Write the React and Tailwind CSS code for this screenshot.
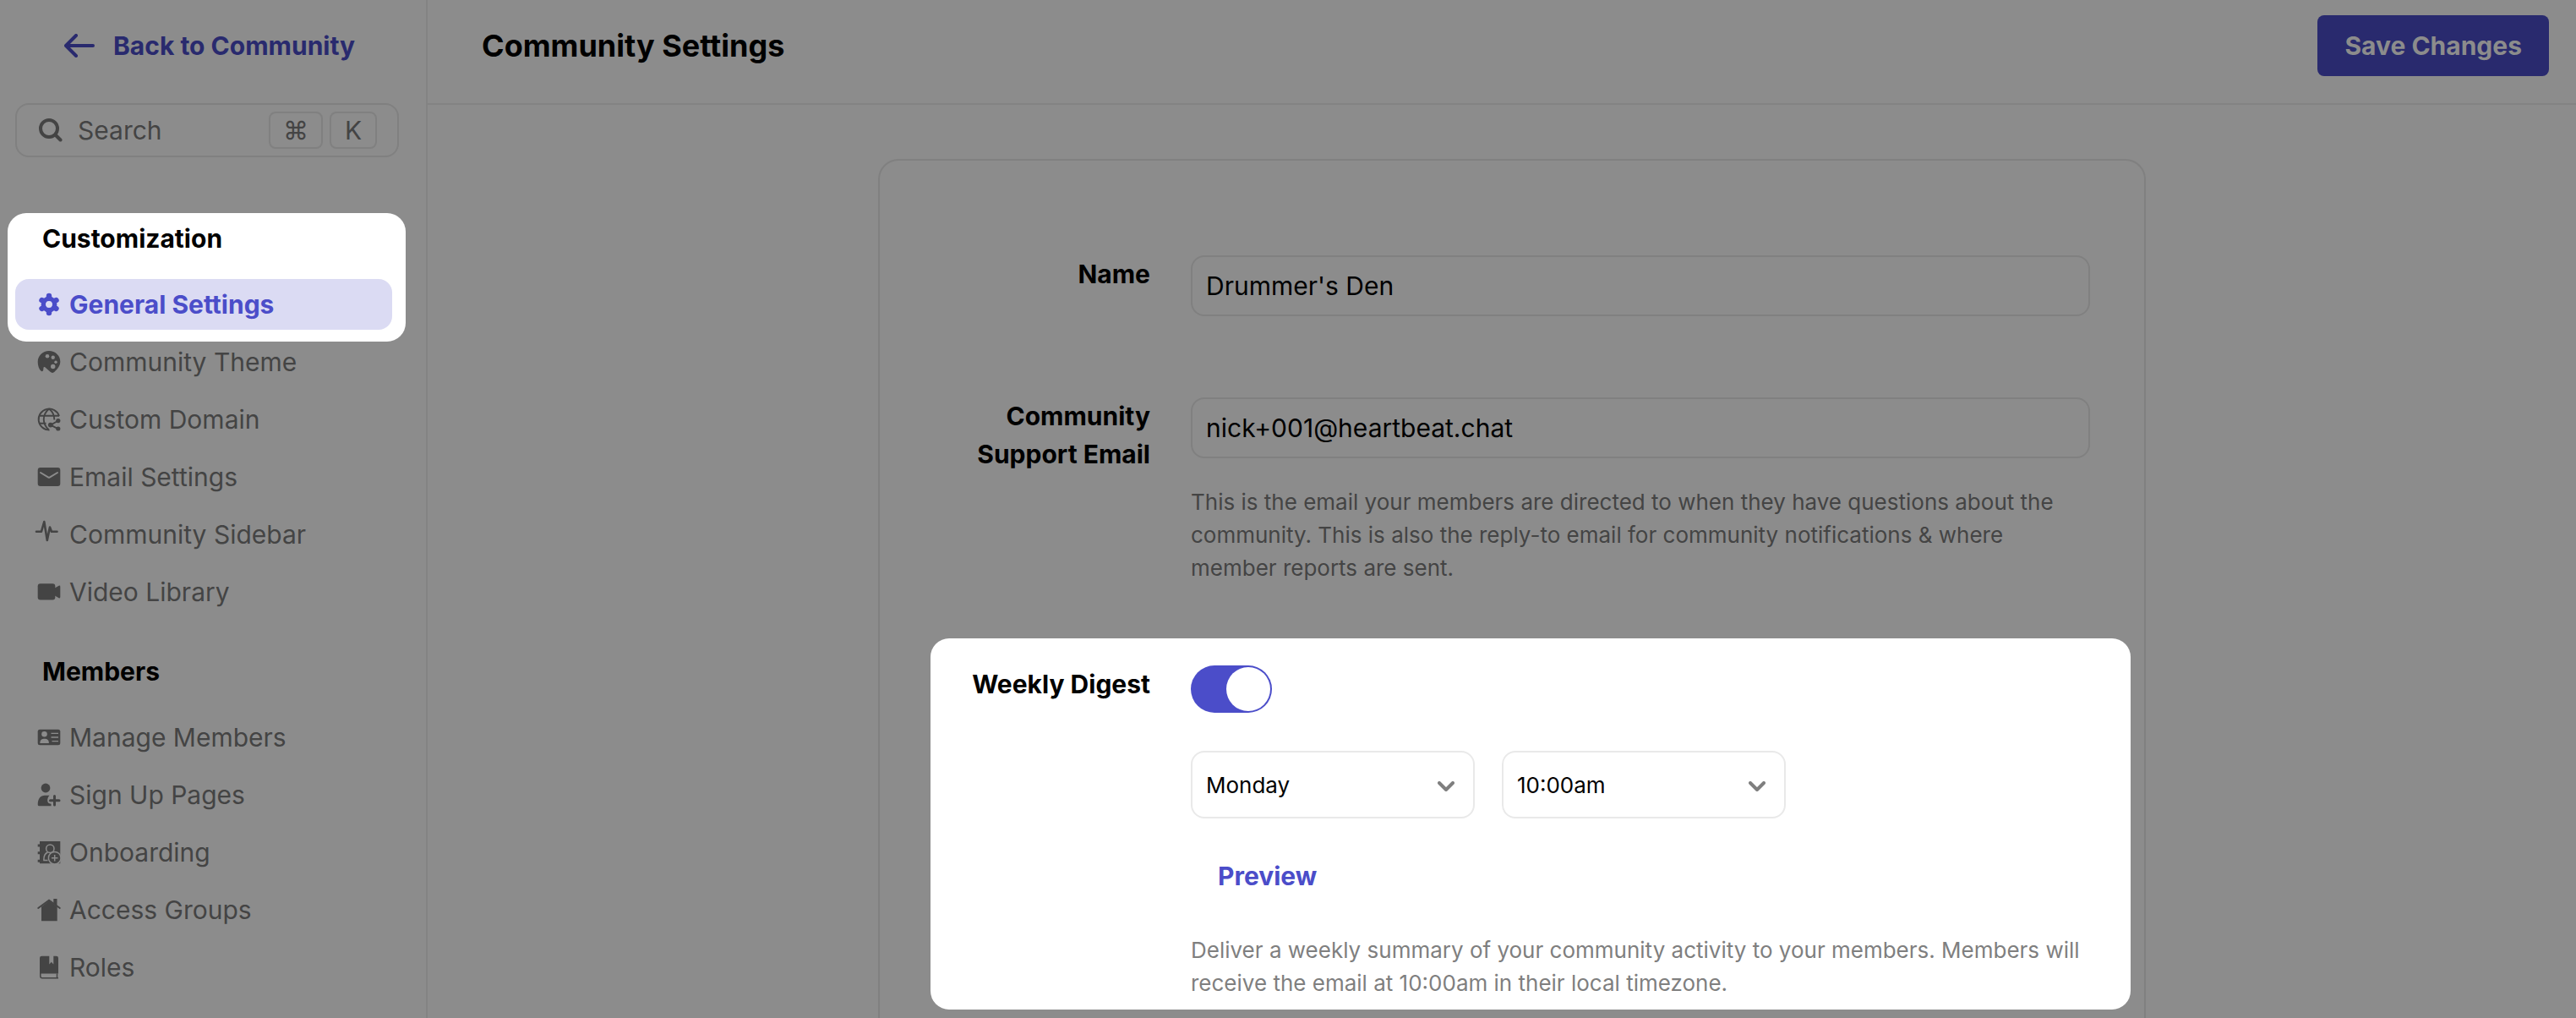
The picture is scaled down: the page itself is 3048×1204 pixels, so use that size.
import React, { useState } from 'react';

const Icon = ({ children }) => (
  <svg viewBox="0 0 28 28" fill="currentColor" className="size-7 shrink-0 overflow-visible" aria-hidden="true">
    {children}
  </svg>
);

const GearIcon = () => (
  <Icon>
    <circle cx="14" cy="14" r="6.7" fill="none" stroke="currentColor" strokeWidth="5.4" />
    <path
      d="M14 6.5V3.9M14 21.5V24.1M20.5 10.3L22.5 9.1M20.5 17.7L22.5 18.9M7.5 10.3L5.5 9.1M7.5 17.7L5.5 18.9"
      stroke="currentColor"
      strokeWidth="6.4"
      strokeLinecap="round"
    />
  </Icon>
);

const PaletteIcon = () => (
  <Icon>
    <path d="M14 1C6.6 1 .7 6.8.7 14c0 4.700 1.500 8.600 3.600 10.600 1.200 1.100 2.700.6 2.900-1L7.500 20.800c.1-.9 1-1.100 1.700-.6L15.500 25.800c1.600 1.500 3.600 1.500 5 0C24.500 21.800 27.300 18.500 27.300 13.500 27.300 6.500 21.300 1 14 1Z" />
    <g fill="#8c8c8c">
      <circle cx="12" cy="7.3" r="2.3" />
      <circle cx="18.7" cy="8.7" r="2.2" />
      <circle cx="22" cy="14.3" r="1.7" />
      <circle cx="18.7" cy="19.5" r="2.7" />
    </g>
  </Icon>
);

const GlobeShareIcon = () => (
  <Icon>
    <g fill="none" stroke="currentColor" strokeWidth="1.9">
      <path d="M26 10A12.500 12.500 0 1 0 14.500 26.500" />
      <path d="M2 9.700H26M2 18.700H10.500M14 1.500C5.500 9 6 19 13.500 26M14 1.500C18.500 5 20.300 9.500 20.300 14.500" />
    </g>
    <path d="M25.300 15.300 16 20.700 25 25.300" fill="none" stroke="currentColor" strokeWidth="1.9" />
    <circle cx="24.8" cy="15.6" r="2.6" />
    <circle cx="15.8" cy="20.6" r="2.9" />
    <circle cx="24.8" cy="25" r="2.6" />
  </Icon>
);

const MailIcon = () => (
  <Icon>
    <rect x=".7" y="3" width="26.6" height="22" rx="3" />
    <path d="M4 9 13.300 14.700Q14 15 14.700 14.700L24 9" fill="none" stroke="#8c8c8c" strokeWidth="2" strokeLinecap="round" />
  </Icon>
);

const PulseIcon = () => (
  <Icon>
    <path
      d="M-1 10.700H5L8.300-1 11.800 21 15 5.500 17 10.700H23.500"
      fill="none"
      stroke="currentColor"
      strokeWidth="2.6"
      strokeLinecap="round"
      strokeLinejoin="round"
    />
  </Icon>
);

const VideoIcon = () => (
  <Icon>
    <rect x=".7" y="4.3" width="20.6" height="19.3" rx="3" />
    <path d="M20 10 25.600 6.700Q27.300 6 27.300 8V20Q27.300 22 25.600 21.300L20 18Z" />
  </Icon>
);

const IdCardIcon = () => (
  <Icon>
    <rect x=".7" y="4.7" width="26.6" height="18.6" rx="2.5" />
    <g fill="#8c8c8c">
      <circle cx="8.5" cy="10.3" r="3.3" />
      <path d="M3.300 21C3.300 17 5.500 15.700 8.600 15.700S13.900 17 13.900 21Z" />
    </g>
    <path d="M16.500 9.300H25M16.500 14H25M17.500 18.700H25" stroke="#8c8c8c" strokeWidth="1.3" />
  </Icon>
);

const UserPlusIcon = () => (
  <Icon>
    <circle cx="10" cy="6" r="5.4" />
    <path d="M.7 25.500C.7 18.500 4 14.700 9 14.700H14.500C12 17.500 11.800 20.500 12.500 22.500 13.500 24.500 15 24.500 16.500 24.700V27.300H2Q.7 27.300.7 25.500Z" />
    <path d="M20.500 15.500V26M15.500 20.700H26" stroke="currentColor" strokeWidth="3" strokeLinecap="round" />
  </Icon>
);

const ContactBookIcon = () => (
  <Icon>
    <path d="M3 1H27.300V27.300H3V25.800H.7V22.800H3V16.300H.7V13.300H3V7.500H.7V4.500H3Z" />
    <g fill="none" stroke="#8c8c8c" strokeWidth="1.5">
      <circle cx="15.3" cy="9.7" r="4.7" />
      <path d="M8 23.500H12.500M8 24.200C7.500 19 9 15.500 12.500 14" />
      <circle cx="20.7" cy="20.7" r="7.3" fill="#444444" />
      <path d="M20.700 17V24.400M17 20.700H24.400" />
    </g>
  </Icon>
);

const HouseIcon = () => (
  <Icon>
    <path d="M5 10.500 14 3.500 23.700 10.500V27.300H5Z" />
    <path d="M19.300 1H23.500V10L19.300 7Z" />
    <path d="M1.200 12 14 2.700 26.800 12" fill="none" stroke="currentColor" strokeWidth="2" strokeLinecap="round" />
  </Icon>
);

const BookIcon = () => (
  <Icon>
    <path d="M5.500.7H14.300V10.500L16.800 7.700 19.300 10.500V.7H22.500Q25 .7 25 3V21.500H3V3Q3 .7 5.500.7Z" />
    <path d="M3.800 20V24.500Q3.800 26.800 6 26.800H25M23.500 21.500V26.500" fill="none" stroke="currentColor" strokeWidth="1.5" />
  </Icon>
);

const customizationLinks = [
  { label: 'Community Theme', icon: PaletteIcon },
  { label: 'Custom Domain', icon: GlobeShareIcon },
  { label: 'Email Settings', icon: MailIcon },
  { label: 'Community Sidebar', icon: PulseIcon },
  { label: 'Video Library', icon: VideoIcon },
];

const memberLinks = [
  { label: 'Manage Members', icon: IdCardIcon },
  { label: 'Sign Up Pages', icon: UserPlusIcon },
  { label: 'Onboarding', icon: ContactBookIcon },
  { label: 'Access Groups', icon: HouseIcon },
  { label: 'Roles', icon: BookIcon },
];

const NavList = ({ links }) => (
  <ul className="flex flex-col gap-2 px-[18px]">
    {links.map(({ label, icon: LinkIcon }) => (
      <li key={label}>
        <a href="#" className="flex h-[60px] items-center gap-[10px] rounded-2xl px-[26px]">
          <LinkIcon />
          {label}
        </a>
      </li>
    ))}
  </ul>
);

const Sidebar = () => (
  <aside className="w-[506px] shrink-0 border-r-2 border-[#838383] text-[#444444]">
    <a href="#" className="flex h-[108px] items-center gap-[22px] pl-[76px] font-bold text-[#292a6e]">
      <svg viewBox="0 0 36 28" className="h-7 w-9" fill="none" stroke="currentColor" strokeWidth="4" strokeLinecap="round" strokeLinejoin="round" aria-hidden="true">
        <path d="M34 14H3M14 2 2 14 14 26" />
      </svg>
      Back to Community
    </a>

    <div className="mt-[14px] mr-8 ml-[18px] flex h-16 items-center rounded-2xl border-2 border-[#808080] pr-6 pl-[26px]">
      <svg viewBox="0 0 28 28" className="size-7 shrink-0" fill="none" stroke="currentColor" strokeWidth="4" strokeLinecap="round" aria-hidden="true">
        <circle cx="12" cy="12" r="10" />
        <path d="M19.500 19.500 25.500 25.500" />
      </svg>
      <input
        type="text"
        aria-label="Search"
        placeholder="Search"
        className="ml-[18px] w-0 flex-1 bg-transparent outline-none placeholder:text-[#444444]"
      />
      <div className="flex gap-2 text-center leading-10">
        <kbd className="w-16 rounded-lg border-2 border-[#808080] font-['Inter',sans-serif]">⌘</kbd>
        <kbd className="w-14 rounded-lg border-2 border-[#808080] font-['Inter',sans-serif]">K</kbd>
      </div>
    </div>

    <nav className="mt-[66px]">
      <div className="mr-6 ml-[9px] rounded-[22px] bg-white pt-2 pr-4 pb-[14px] pl-[9px]">
        <h2 className="pl-8 leading-[45px] font-bold text-black">Customization</h2>
        <a
          href="#"
          aria-current="page"
          className="mt-[25px] flex h-[60px] items-center gap-[10px] rounded-2xl bg-[#dbdbf3] px-[26px] font-bold text-[#4b4dc9]"
        >
          <GearIcon />
          General Settings
        </a>
      </div>
      <div className="-mt-[6px]">
        <NavList links={customizationLinks} />
      </div>
      <h2 className="mt-[42px] mb-[25px] pl-[50px] leading-[45px] font-bold text-black">Members</h2>
      <NavList links={memberLinks} />
    </nav>
  </aside>
);

const Field = ({ id, label, children }) => (
  <div className="flex gap-12">
    <label htmlFor={id} className="w-64 shrink-0 text-right leading-[45px] font-bold text-black">
      {label}
    </label>
    <div className="min-w-0 flex-1">{children}</div>
  </div>
);

const TextInput = props => (
  <input
    className="h-[72px] w-full rounded-2xl border-2 border-[#808080] bg-transparent px-4 text-black outline-none"
    {...props}
  />
);

const Select = ({ options, ...props }) => (
  <div className="relative w-[336px]">
    <select
      className="h-20 w-full appearance-none rounded-2xl border-2 border-[#e9e9e9] bg-white px-4 text-[26px] text-black outline-none"
      {...props}
    >
      {options.map(option => (
        <option key={option}>{option}</option>
      ))}
    </select>
    <svg viewBox="0 0 20 12" className="pointer-events-none absolute top-9 right-6 h-3 w-5" fill="none" stroke="#7f7f7f" strokeWidth="4" strokeLinecap="round" strokeLinejoin="round" aria-hidden="true">
      <path d="M2 2 10 10 18 2" />
    </svg>
  </div>
);

const SettingsForm = () => {
  const [settings, setSettings] = useState({
    name: "Drummer's Den",
    email: 'nick+001@heartbeat.chat',
    digest: true,
    day: 'Monday',
    time: '10:00am'
  });

  const handleChange = e =>
    setSettings({
      ...settings,
      [e.target.name]: e.target.type === 'checkbox' ? e.target.checked : e.target.value
    });

  return (
    <form id="settings" className="flex w-full max-w-[1500px] flex-col rounded-t-3xl border-2 border-b-0 border-[#808080] px-16 pt-28">
      <Field id="name" label="Name">
        <TextInput id="name" name="name" type="text" value={settings.name} onChange={handleChange} />
      </Field>

      <div className="mt-24">
        <Field id="email" label="Community Support Email">
          <TextInput id="email" name="email" type="email" value={settings.email} onChange={handleChange} />
          <p className="mt-8 text-[26px] leading-[39px] text-[#444444]">
            This is the email your members are directed to when they have questions about the community. This is also the
            reply-to email for community notifications &amp; where member reports are sent.
          </p>
        </Field>
      </div>

      <div className="mt-16 -mr-12 -ml-1 rounded-[22px] bg-white pt-8 pr-12 pb-3 pl-1">
        <Field id="digest" label="Weekly Digest">
          <input
            id="digest"
            name="digest"
            type="checkbox"
            role="switch"
            checked={settings.digest}
            onChange={handleChange}
            className="block h-14 w-24 appearance-none rounded-full bg-[#c4c4c4] p-[2px] before:block before:size-[52px] before:rounded-full before:bg-white checked:bg-[#4b4dc9] checked:before:ml-10"
          />
          <div className="mt-[45px] flex gap-8">
            <Select name="day" aria-label="Digest day" value={settings.day} onChange={handleChange} options={['Monday', 'Tuesday', 'Wednesday', 'Thursday', 'Friday']} />
            <Select name="time" aria-label="Digest time" value={settings.time} onChange={handleChange} options={['9:00am', '10:00am', '11:00am']} />
          </div>
          <button type="button" className="mt-8 h-[72px] px-8 font-bold text-[#4b4dc9]">
            Preview
          </button>
          <p className="mt-8 text-[26px] leading-[39px] text-[#7f7f7f]">
            Deliver a weekly summary of your community activity to your members. Members will receive the email at 10:00am
            in their local timezone.
          </p>
        </Field>
      </div>
    </form>
  );
};

const App = () => (
  <div className="flex h-screen overflow-hidden bg-[#8c8c8c] font-['Inter',sans-serif] text-[30px]">
    <Sidebar />
    <main className="flex min-w-0 flex-1 flex-col">
      <header className="flex items-center justify-between border-b-2 border-[#838383] pt-[18px] pr-8 pb-8 pl-16">
        <h1 className="text-[36px] leading-[48px] font-bold text-black">Community Settings</h1>
        <button type="submit" form="settings" className="h-[72px] rounded-lg bg-[#292a6e] px-8 font-bold text-[#8c8c8c]">
          Save Changes
        </button>
      </header>
      <div className="flex flex-1 justify-center pt-16 pl-6">
        <SettingsForm />
      </div>
    </main>
  </div>
);

export default App;
